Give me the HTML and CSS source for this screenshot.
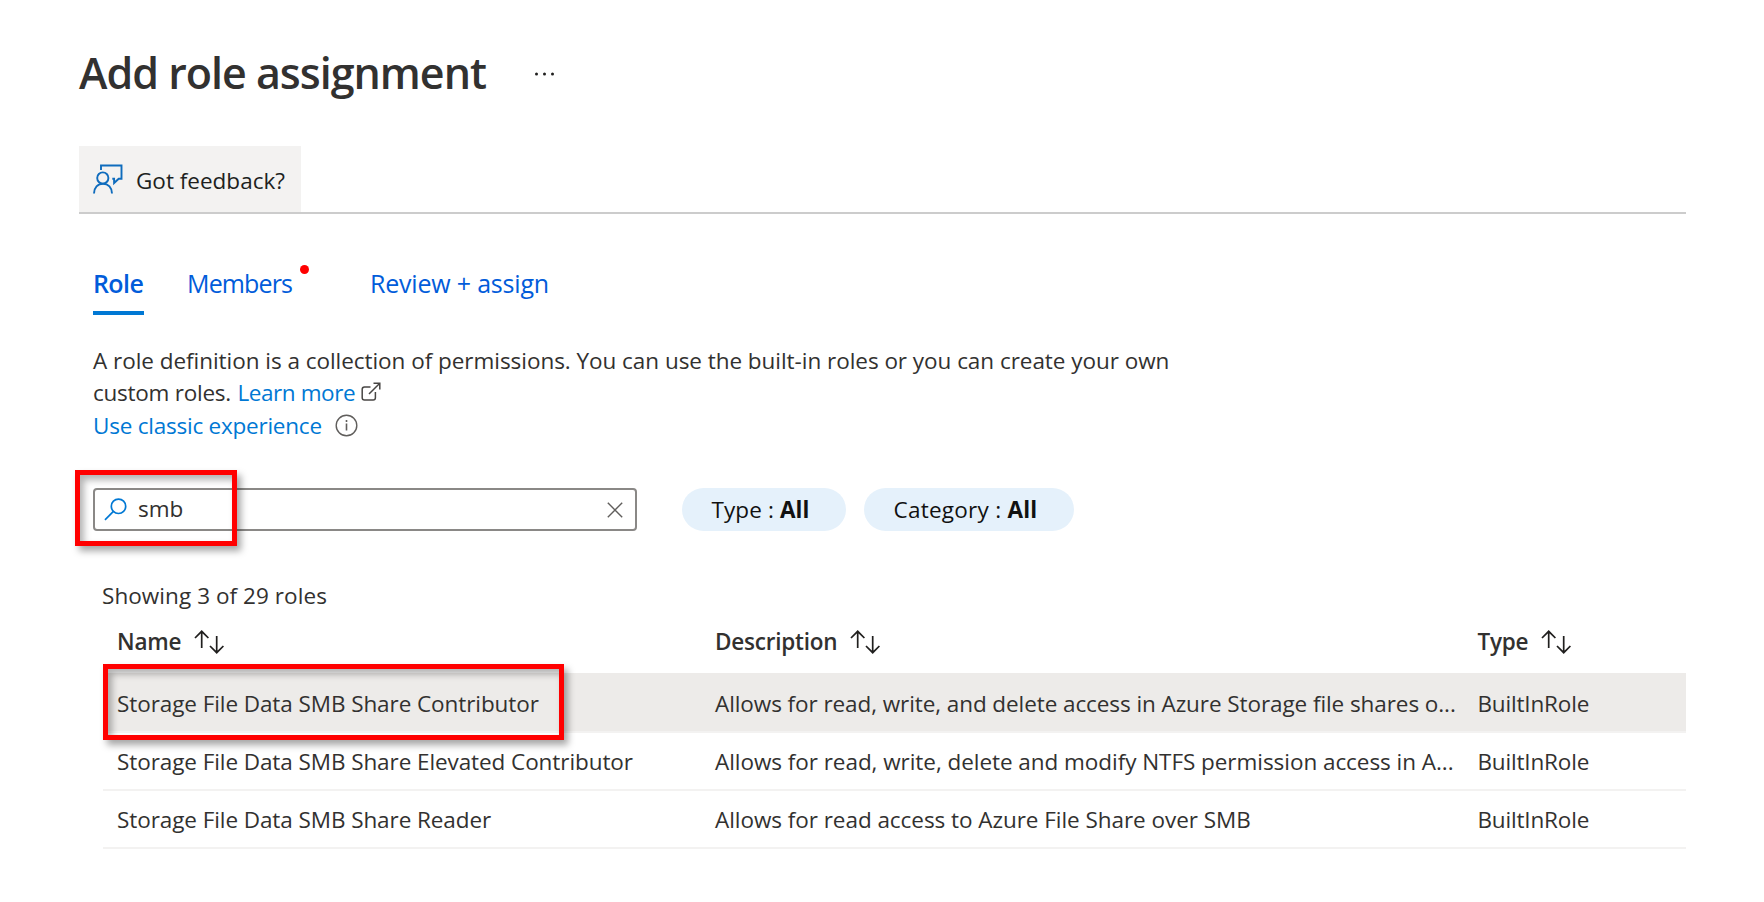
FILE: index.html
```
<!DOCTYPE html>
<html lang="en">
<head>
<meta charset="utf-8">
<title>Add role assignment</title>
<link rel="stylesheet" href="styles.css">
</head>
<body>
<svg class="defs" width="0" height="0">
  <symbol id="sort" viewBox="0 0 30 24"><path d="M7.7 18V1.5M1 8l6.700-6.700L14.400 8M22.700 6v16.500M16 16l6.700 6.700 6.700-6.700" fill="none" stroke="#201f1e" stroke-width="1.7"/></symbol>
</svg>
<main class="page">
  <header class="heading">
    <h1 class="title">Add role assignment</h1>
    <svg class="more" width="22" height="6" viewBox="0 0 22 6"><g fill="#201f1e"><circle cx="2.500" cy="3" r="1.500"/><circle cx="10.500" cy="3" r="1.500"/><circle cx="18.500" cy="3" r="1.500"/></g></svg>
  </header>
  <div class="toolbar">
    <button class="feedback">
      <svg width="30" height="30" viewBox="0 0 30 30" fill="none" stroke="#0f6cbd" stroke-width="1.900"><path d="M8 6V1.500h20.500v13.200h-2.800l-4.600 4.300v-4.300h-1.800"/><circle cx="9.800" cy="14" r="5.600"/><path d="M1 29.500c0-6 3.800-9.800 9-9.800s9 3.800 9 9.800"/></svg>
      <span>Got feedback?</span>
    </button>
  </div>
  <nav class="tabs">
    <a class="tab tab-active">Role</a>
    <a class="tab tab-members">Members<i class="dot"></i></a>
    <a class="tab tab-review">Review + assign</a>
  </nav>
  <section class="intro">
    <p class="definition">A role definition is a collection of permissions. You can use the built-in roles or you can create your own</p>
    <p class="custom">custom roles.<a class="link learn">Learn more</a><svg class="ext" width="20" height="20" viewBox="0 0 20 20" fill="none" stroke="#484644" stroke-width="1.500"><path d="M9.500 5H3.500Q1.200 5 1.200 7.300v8.400Q1.200 18 3.500 18h8.600q2.300 0 2.300-2.300V10M12.500 1.200h6.300v6.300M18.800 1.200L8 12"/></svg></p>
    <p class="classic"><a class="link">Use classic experience</a><svg class="info" width="23" height="23" viewBox="0 0 23 23"><circle cx="11.500" cy="11.500" r="10.300" fill="none" stroke="#605e5c" stroke-width="1.400"/><path d="M11.500 9.500v7M11.500 6v2" stroke="#605e5c" stroke-width="1.600"/></svg></p>
  </section>
  <div class="filters">
    <div class="search">
      <svg width="23" height="23" viewBox="0 0 23 23" fill="none" stroke="#0078d4" stroke-width="1.700"><circle cx="14.500" cy="8.300" r="7.200"/><path d="M9.400 13.400L1 21.800"/></svg>
      <span class="query">smb</span>
      <svg class="clear" width="16" height="16" viewBox="0 0 16 16" stroke="#605e5c" stroke-width="1.400"><path d="M.8.800l14.400 14.400M15.200.800L.8 15.200"/></svg>
      <div class="mark mark-search"></div>
    </div>
    <span class="pill pill-type">Type : <b>All</b></span>
    <span class="pill pill-category">Category : <b>All</b></span>
  </div>
  <section class="roles">
    <p class="count">Showing 3 of 29 roles</p>
    <div class="row head">
      <span class="cell"><b>Name</b><svg class="sort" width="30" height="24"><use href="#sort"/></svg></span>
      <span class="cell"><b>Description</b><svg class="sort" width="30" height="24"><use href="#sort"/></svg></span>
      <span class="cell"><b>Type</b><svg class="sort" width="30" height="24"><use href="#sort"/></svg></span>
    </div>
    <div class="row selected">
      <span class="cell">Storage File Data SMB Share Contributor</span>
      <span class="cell">Allows for read, write, and delete access in Azure Storage file shares o...</span>
      <span class="cell type">BuiltInRole</span>
      <div class="mark mark-row"></div>
    </div>
    <div class="row">
      <span class="cell">Storage File Data SMB Share Elevated Contributor</span>
      <span class="cell wide">Allows for read, write, delete and modify NTFS permission access in A...</span>
      <span class="cell type">BuiltInRole</span>
    </div>
    <div class="row">
      <span class="cell">Storage File Data SMB Share Reader</span>
      <span class="cell wide">Allows for read access to Azure File Share over SMB</span>
      <span class="cell type">BuiltInRole</span>
    </div>
  </section>
</main>
</body>
</html>
```
FILE: styles.css
```
* { box-sizing: border-box; }
body { margin: 0; background: #fff; color: #323130; font: 22.5px/32px "Open Sans", "Noto Sans", sans-serif; }
h1, p { margin: 0; }
b { font-weight: 600; }
svg { flex: none; display: block; }
.defs { position: absolute; }
.page { width: 1764px; height: 902px; padding: 41px 78px 0 79px; overflow: hidden; white-space: nowrap; }
.heading { display: flex; align-items: center; height: 64px; }
.title { width: 455px; font-size: 43px; line-height: 60px; font-weight: 600; letter-spacing: -1px; }
.more { margin-top: 2px; }
.toolbar { display: flex; margin-top: 41px; height: 67.5px; border-bottom: 2px solid #cccccc; }
.feedback { display: flex; align-items: center; gap: 14px; width: 222px; height: 66px; padding: 0 0 0 14px; border: 0; background: #f3f2f1; color: #201f1e; font: inherit; }
.feedback span { padding-top: 3px; margin-left: -1px; }
.tabs { display: flex; margin: 50.5px 0 0 14px; height: 51px; }
.tab { font-size: 25px; line-height: 39px; color: #015cda; height: 51px; }
.tab-active { width: 51px; margin-right: 43px; font-weight: 600; letter-spacing: -0.6px; border-bottom: 4px solid #0078d4; }
.tab-members { position: relative; width: 183px; letter-spacing: -0.85px; }
.tab-review { letter-spacing: -0.2px; }
.dot { position: absolute; left: 113px; top: 1px; width: 9px; height: 9px; border-radius: 50%; background: #f00; }
.intro { margin: 30px 0 0 14px; }
.intro p { display: flex; height: 32px; }
.intro .definition { letter-spacing: -0.04px; }
.intro .custom { letter-spacing: -0.25px; }
.intro .classic { height: 34px; line-height: 34px; letter-spacing: -0.23px; }
.link { color: #0078d4; }
.intro .learn { margin-left: 6.500px; letter-spacing: -0.42px; }
.ext { margin: 5px 0 0 6px; }
.info { margin: 5px 0 0 13px; }
.filters { display: flex; align-items: center; margin: 45px 0 0 14px; height: 43px; }
.search { position: relative; display: flex; align-items: center; width: 544px; height: 43px; padding: 0 12px 0 9px; border: 2px solid #8a8886; border-radius: 4px; margin-right: 45px; }
.query { margin: -2px 0 0 11px; }
.clear { margin-left: auto; }
.pill { height: 43px; line-height: 43px; border-radius: 22px; background: #e5f1fb; color: #111; padding-left: 29.500px; letter-spacing: 0.1px; }
.pill b { font-weight: 700; }
.pill-type { width: 164px; margin-right: 18px; }
.pill-category { width: 210px; letter-spacing: 0.25px; }
.mark { position: absolute; border: 5px solid #f00; box-shadow: 4px 5px 7px rgba(0,0,0,.35), inset 4px 5px 7px rgba(0,0,0,.3); }
.mark-search { left: -20px; top: -20px; width: 162px; height: 76px; }
.mark-row { left: 0; top: -9px; width: 461px; height: 76px; }
.roles { margin: 47px 0 0 24px; }
.count { height: 38px; line-height: 36px; margin-left: -1px; letter-spacing: 0.06px; }
.row { position: relative; display: grid; grid-template-columns: 598px 762.5px 1fr; align-items: center; height: 58px; padding: 2px 0 0 14px; border-bottom: 2px solid #f3f2f1; letter-spacing: -0.08px; }
.row.head { height: 57px; padding: 0 0 6px 14px; border: 0; letter-spacing: -0.22px; }
.head .cell { display: flex; align-items: center; }
.sort { margin-left: 13px; }
.type { letter-spacing: -0.17px; }
.wide { letter-spacing: -0.05px; }
.row.selected { height: 60px; padding-top: 3px; background: #edebe9; }
```
